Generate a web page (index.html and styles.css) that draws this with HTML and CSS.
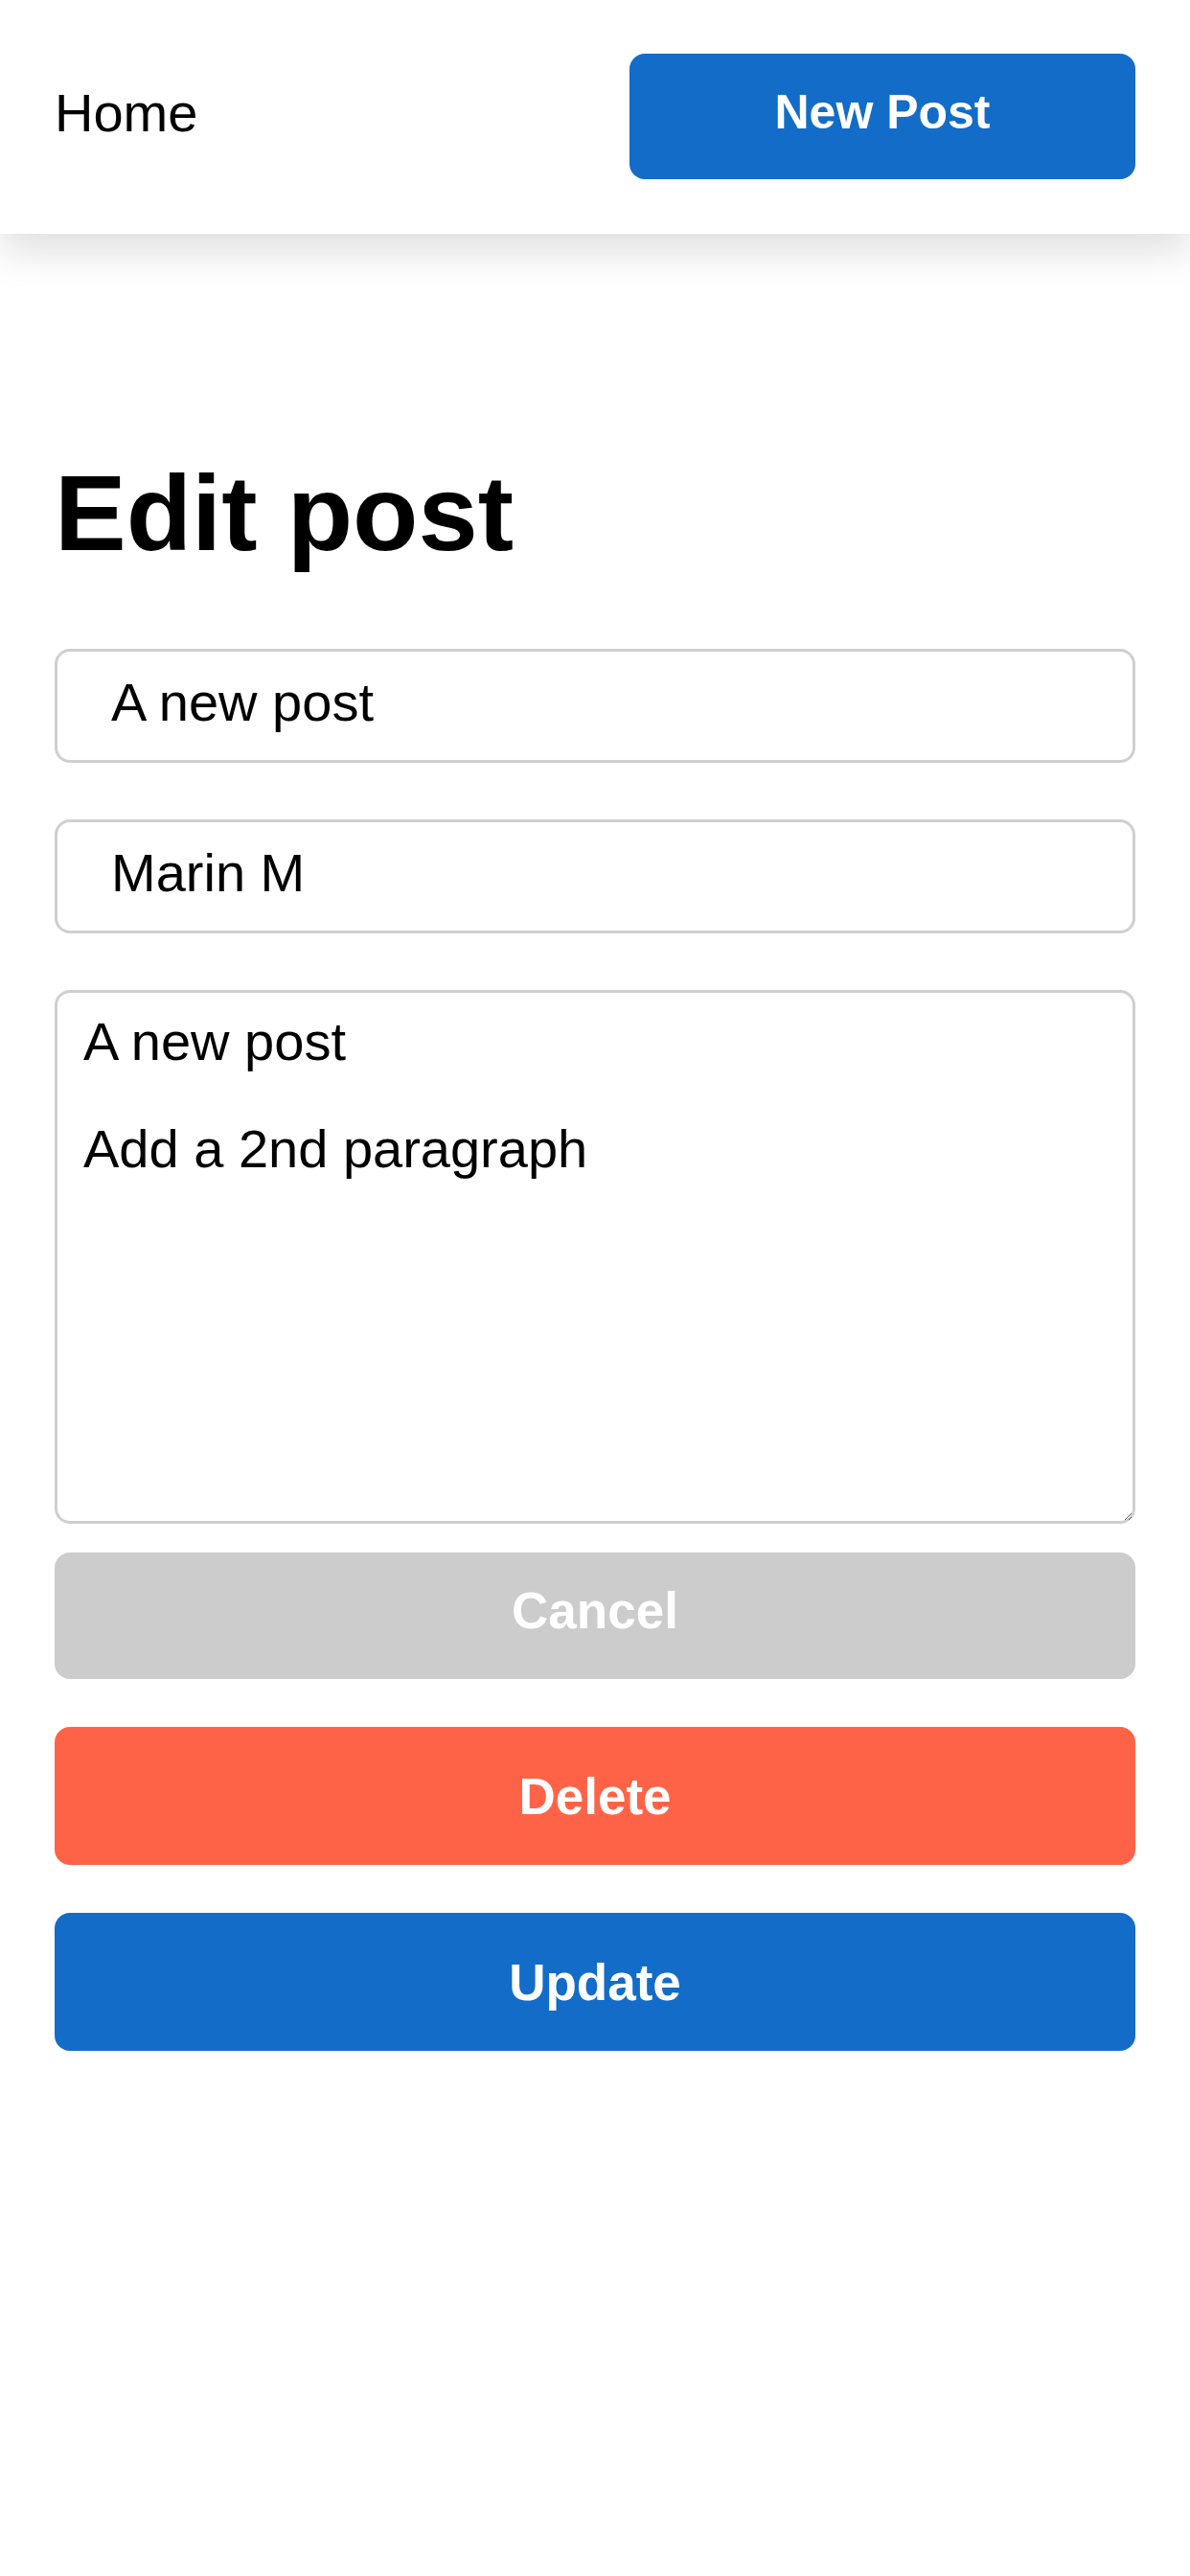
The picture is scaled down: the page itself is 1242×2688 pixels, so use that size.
FILE: index.html
```
<!DOCTYPE html>
<html lang="en">
<head>
<meta charset="utf-8">
<title>Edit post</title>
<link rel="stylesheet" href="styles.css">
</head>
<body>
<header class="topbar">
  <a class="home-link" href="#">Home</a>
  <a class="btn btn-new" href="#">New Post</a>
</header>
<main class="page">
  <h1 class="title">Edit post</h1>
  <form class="post-form">
    <input class="field" type="text" value="A new post">
    <input class="field" type="text" value="Marin M">
    <textarea class="field-area">A new post

Add a 2nd paragraph</textarea>
    <div class="actions">
      <button type="button" class="btn btn-cancel">Cancel</button>
      <button type="button" class="btn btn-delete">Delete</button>
      <button type="button" class="btn btn-update">Update</button>
    </div>
  </form>
</main>
</body>
</html>
```
FILE: styles.css
```
* { box-sizing: border-box; }
html, body { margin: 0; padding: 0; background: #fff; }
body {
  font-family: "Liberation Sans", Arial, Helvetica, sans-serif;
  color: #000;
  width: 1242px;
  min-height: 2688px;
}
.topbar {
  position: relative;
  z-index: 1;
  height: 244px;
  display: flex;
  align-items: center;
  justify-content: space-between;
  padding: 0 57px;
  background: #fff;
  box-shadow: 0 18px 40px rgba(0, 0, 0, 0.13);
}
.home-link {
  font-size: 56px;
  color: #000;
  text-decoration: none;
  margin-top: -10px;
}
.btn {
  display: flex;
  align-items: center;
  justify-content: center;
  border: none;
  color: #fff;
  font-family: "Liberation Sans", Arial, Helvetica, sans-serif;
  font-weight: bold;
  font-size: 52px;
  text-decoration: none;
  border-radius: 16px;
  padding: 0;
  cursor: pointer;
}
.btn-new {
  width: 528px;
  height: 131px;
  background: #136cc8;
  margin-top: -1px;
  font-size: 50px;
  padding-bottom: 10px;
}
.page {
  padding: 226px 57px 0;
}
.title {
  margin: 0 0 75px;
  font-size: 112px;
  font-weight: bold;
  line-height: 132px;
}
.post-form {
  display: flex;
  flex-direction: column;
}
.field {
  display: block;
  width: 100%;
  height: 119px;
  margin: 0 0 59px;
  padding: 0 56px 8px;
  border: 3px solid #cfcfcf;
  border-radius: 16px;
  font-family: "Liberation Sans", Arial, Helvetica, sans-serif;
  font-size: 56px;
  color: #000;
  background: #fff;
  outline: none;
}
.field-area {
  display: block;
  width: 100%;
  height: 557px;
  margin: 0;
  padding: 23px 27px;
  border: 3px solid #cfcfcf;
  border-radius: 16px;
  font-family: "Liberation Sans", Arial, Helvetica, sans-serif;
  font-size: 56px;
  line-height: 56px;
  color: #000;
  background: #fff;
  outline: none;
}
.actions {
  display: flex;
  flex-direction: column;
  gap: 50px;
  margin-top: 30px;
}
.actions .btn {
  width: 100%;
  height: 144px;
  font-size: 53px;
}
.actions .btn-cancel {
  height: 132px;
  padding-bottom: 12px;
  background: #cccccc;
}
.btn-delete { background: #ff6347; }
.btn-update { background: #136cc8; }
```
